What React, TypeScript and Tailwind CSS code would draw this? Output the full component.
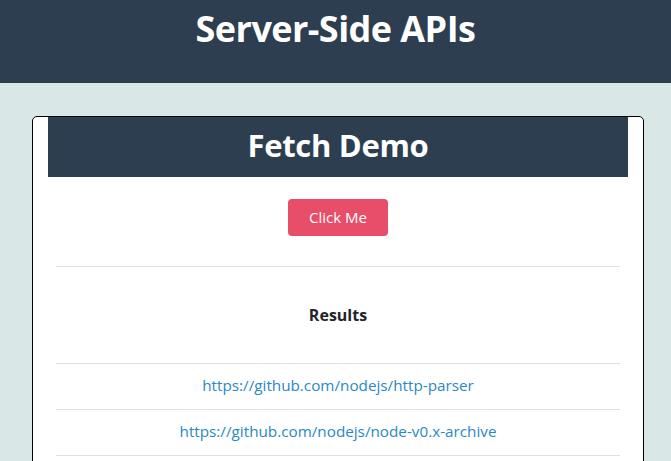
import React from 'react';

const links = [
  'https://github.com/nodejs/http-parser',
  'https://github.com/nodejs/node-v0.x-archive',
];

const App: React.FC = () => {
  return (
    <div className="min-h-screen bg-[#d9e8e6] font-['Open_Sans',sans-serif]">
      {/* Page header */}
      <header className="h-[83px] bg-[#2c3e50] pt-[3px] text-center">
        <h1 className="text-[36px] font-bold leading-[52px] tracking-[-0.55px] text-white">Server-Side APIs</h1>
      </header>

      <main className="pl-[32px] pr-[27px] pt-[33px]">
        <section className="rounded-[5px] border border-black bg-white px-[15px] pb-[24px]">
          {/* Card title */}
          <div className="flex h-[60px] items-center justify-center bg-[#2c3e50] pb-[3px]">
            <h2 className="text-[31px] font-bold tracking-[-0.3px] text-white">Fetch Demo</h2>
          </div>

          <div className="flex justify-center pt-[22px] pb-[30px]">
            <button className="h-[37px] w-[100px] rounded-[4px] bg-[#e84e69] text-[15px] text-white">Click Me</button>
          </div>

          <div className="mx-[8px] border-b border-[#dee2e6]">
            <div className="flex h-[97px] items-center justify-center border-t border-[#dee2e6]">
              <h3 className="text-[16px] font-bold text-[#212529]">Results</h3>
            </div>
            {links.map((url) => (
              <div key={url} className="flex h-[46px] items-center justify-center border-t border-[#dee2e6] pb-[2px]">
                <a href="#" className="text-[15.25px] text-[#2a88c4]">{url}</a>
              </div>
            ))}
          </div>
        </section>
      </main>
    </div>
  );
};

export default App;
